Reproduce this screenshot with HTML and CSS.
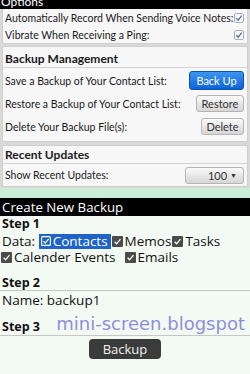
FILE: index.html
```html
<!DOCTYPE html>
<html>
<head>
<meta charset="utf-8">
<link rel="stylesheet" href="styles.css">
</head>
<body>
<div class="screen">
  <div class="opts"><span class="opts-text">Options</span></div>
  <div class="upper">
    <div class="group g1">
      <div class="row r17"><span>Automatically Record When Sending Voice Notes:</span>
        <svg class="ucb" viewBox="0 0 10 10"><rect x=".5" y=".5" width="9" height="9" rx="1.5" fill="#f7f9fc" stroke="#a3b0c2"/><path d="M2.4 5.3 L4.2 7.2 L7.7 2.7" fill="none" stroke="#56709a" stroke-width="1.3"/></svg></div>
      <div class="row r17"><span>Vibrate When Receiving a Ping:</span>
        <svg class="ucb" viewBox="0 0 10 10"><rect x=".5" y=".5" width="9" height="9" rx="1.5" fill="#f7f9fc" stroke="#a3b0c2"/><path d="M2.4 5.3 L4.2 7.2 L7.7 2.7" fill="none" stroke="#56709a" stroke-width="1.3"/></svg></div>
    </div>
    <div class="group g2">
      <div class="ghead h2">Backup Management</div>
      <div class="rows">
        <div class="row r23"><span>Save a Backup of Your Contact List:</span><span class="btn blue w55">Back Up</span></div>
        <div class="row r23"><span>Restore a Backup of Your Contact List:</span><span class="btn grey w48">Restore</span></div>
        <div class="row r23"><span>Delete Your Backup File(s):</span><span class="btn grey w43">Delete</span></div>
      </div>
    </div>
    <div class="group g3">
      <div class="ghead h3">Recent Updates</div>
      <div class="row r22"><span>Show Recent Updates:</span><span class="btn grey sel">100 <span class="arrow">▼</span></span></div>
    </div>
  </div>
  <div class="strip"></div>
  <div class="lower">
    <div class="title">Create New Backup</div>
    <div class="step s1">Step 1</div>
    <div class="line">Data:&nbsp;<span class="hl"><svg class="lcb" viewBox="0 0 10 10"><rect x=".6" y=".6" width="8.8" height="8.8" rx="1" fill="none" stroke="#fff" stroke-width="1.1"/><path d="M2.4 5.2 L4.2 7.1 L7.7 2.8" fill="none" stroke="#fff" stroke-width="1.2"/></svg>Contacts</span><svg class="lcb" viewBox="0 0 10 10"><rect width="10" height="10" rx="1" fill="#4b4b4b"/><path d="M2.4 5.2 L4.2 7.1 L7.7 2.8" fill="none" stroke="#fff" stroke-width="1.2"/></svg>Memos<svg class="lcb" viewBox="0 0 10 10"><rect width="10" height="10" rx="1" fill="#4b4b4b"/><path d="M2.4 5.2 L4.2 7.1 L7.7 2.8" fill="none" stroke="#fff" stroke-width="1.2"/></svg>Tasks</div>
    <div class="line"><svg class="lcb first" viewBox="0 0 10 10"><rect width="10" height="10" rx="1" fill="#4b4b4b"/><path d="M2.4 5.2 L4.2 7.1 L7.7 2.8" fill="none" stroke="#fff" stroke-width="1.2"/></svg>Calender Events<svg class="lcb spaced" viewBox="0 0 10 10"><rect width="10" height="10" rx="1" fill="#4b4b4b"/><path d="M2.4 5.2 L4.2 7.1 L7.7 2.8" fill="none" stroke="#fff" stroke-width="1.2"/></svg>Emails</div>
    <div class="step s2 ruled">Step 2</div>
    <div class="line name">Name: backup1</div>
    <div class="step s3 ruled">Step 3</div>
    <div class="btnrow"><span class="dbtn">Backup</span></div>
    <div class="watermark">mini-screen.blogspot</div>
  </div>
</div>
</body>
</html>
```

FILE: styles.css
```css
html, body {
  margin: 0;
  padding: 0;
  background: #f3faf3;
}
.screen {
  width: 250px;
  height: 374px;
  overflow: hidden;
  position: relative;
  font-family: "Open Sans", "DejaVu Sans", sans-serif;
}
.opts {
  height: 9px;
  background: #000;
  overflow: hidden;
}
.opts-text {
  display: block;
  color: #fff;
  font-family: Lato, sans-serif;
  font-size: 12px;
  line-height: 14px;
  margin-top: -5px;
  padding-left: 1px;
}
.upper {
  background: #d9d9d9;
  padding: 0 2px 1px 2px;
  display: flex;
  flex-direction: column;
  gap: 2px;
}
.group {
  background: #f7f7f7;
  border: 1px solid #cfcfcf;
  border-radius: 2px;
  color: #1a1a1a;
  font-family: Lato, sans-serif;
  font-size: 10.5px;
  white-space: nowrap;
}
.g1 { border-top: none; }
.g3 { margin-top: 1px; }
.row {
  display: flex;
  align-items: center;
  justify-content: space-between;
  padding: 0 3px 0 2px;
}
.r17 { height: 17px; }
.r23 { height: 23px; }
.r22 { height: 22px; }
.ucb {
  width: 10px;
  height: 10px;
}
.ghead {
  font-weight: 700;
  font-size: 12px;
  padding-left: 2px;
  border-bottom: 1px solid #d4d4d4;
  display: flex;
  align-items: center;
}
.h2 { height: 18px; padding-top: 2px; }
.h3 { height: 17px; }
.rows { padding: 1px 0 3px; }
.btn {
  display: flex;
  align-items: center;
  justify-content: center;
  box-sizing: border-box;
  height: 17px;
  border-radius: 3px;
  font-size: 11px;
}
.blue {
  height: 19px;
  color: #fff;
  background: linear-gradient(#3d95f0, #0d63d6);
  border: 1px solid #0a52b8;
}
.grey {
  color: #333;
  background: linear-gradient(#fafafa, #d6d6d6);
  border: 1px solid #b5b5b5;
}
.w55 { width: 55px; }
.w48 { width: 48px; }
.w43 { width: 43px; }
.sel {
  width: 59px;
  justify-content: flex-end;
  padding-right: 6px;
  gap: 3px;
}
.arrow { font-size: 7px; }
.strip {
  height: 10px;
  background: #cbeed9;
}
.lower {
  background: #f3faf3;
  color: #111;
  font-size: 13.5px;
}
.title {
  height: 18px;
  line-height: 18px;
  background: #000;
  color: #fff;
  font-size: 13.3px;
  padding-left: 2px;
}
.step {
  font-weight: 700;
  font-size: 12.5px;
  padding-left: 2px;
  line-height: 16px;
}
.s1 { height: 17px; }
.s2 { margin-top: 10px; height: 15px; }
.s3 { margin-top: 11px; height: 16px; }
.ruled { border-bottom: 1px solid #c4c8c4; }
.line {
  height: 16px;
  line-height: 16px;
  padding-left: 2px;
  display: flex;
  align-items: center;
  white-space: nowrap;
}
.name { margin-top: 1px; }
.hl {
  display: inline-flex;
  align-items: center;
  background: #1f63c9;
  color: #fff;
  height: 15px;
  padding: 0 3px 0 2px;
}
.lcb {
  flex: none;
  width: 11px;
  height: 11px;
  margin: 0 2px 0 1px;
}
.hl .lcb { width: 10px; height: 10px; margin: 0 2px 0 0; }
.lcb.first { margin-left: -1px; }
.lcb.spaced { margin-left: 9px; }
.btnrow {
  display: flex;
  justify-content: center;
  padding-top: 3px;
}
.dbtn {
  width: 72px;
  height: 20px;
  line-height: 20px;
  text-align: center;
  background: #3b3b3b;
  color: #f2f2f2;
  border-radius: 4px;
  font-size: 13px;
}
.watermark {
  position: absolute;
  right: 5px;
  top: 313px;
  font-family: "DejaVu Sans", sans-serif;
  font-size: 18px;
  color: #8c8fdd;
}
```
